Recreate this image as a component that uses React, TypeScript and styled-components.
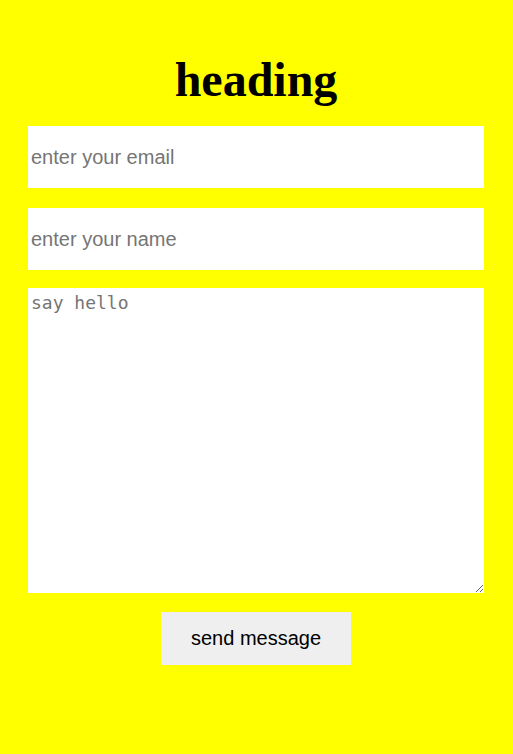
import styled, { createGlobalStyle } from "styled-components";

const GlobalStyle = createGlobalStyle`
  html, body {
    margin: 0;
    padding: 0;
    background: #ffff00;
  }
  body {
    min-height: 754px;
  }
`;

const Page = styled.main`
  display: flex;
  flex-direction: column;
  align-items: center;
  padding: 53px 29px 0 28px;
`;

const Heading = styled.h1`
  margin: 0 0 20px;
  font-family: "Liberation Serif", "Times New Roman", serif;
  font-size: 48px;
  font-weight: 700;
  color: #000;
  line-height: 53px;
`;

const Form = styled.form`
  width: 100%;
  display: flex;
  flex-direction: column;
  align-items: center;
`;

const Field = styled.input`
  box-sizing: border-box;
  width: 100%;
  height: 62px;
  margin-bottom: 20px;
  padding: 0 3px;
  border: none;
  outline: none;
  background: #fff;
  font-family: "Liberation Sans", Arial, sans-serif;
  font-size: 20px;
  color: #000;

  &::placeholder {
    color: #757575;
  }
`;

const Message = styled.textarea`
  box-sizing: border-box;
  width: 100%;
  height: 305px;
  margin: -2px 0 19px;
  padding: 4px 3px;
  border: none;
  outline: none;
  background: #fff;
  font-family: "DejaVu Sans Mono", monospace;
  font-size: 18px;
  display: block;

  &::placeholder {
    color: #757575;
  }
`;

const SendButton = styled.button`
  width: 190px;
  height: 53px;
  border: none;
  background: #efefef;
  font-family: "Liberation Sans", Arial, sans-serif;
  font-size: 20px;
  color: #000;
  cursor: pointer;
`;

export default function App() {
  return (
    <>
      <GlobalStyle />
      <Page>
        <Heading>heading</Heading>
        <Form onSubmit={(e) => e.preventDefault()}>
          <Field type="email" placeholder="enter your email" />
          <Field type="text" placeholder="enter your name" />
          <Message placeholder="say hello" />
          <SendButton type="submit">send message</SendButton>
        </Form>
      </Page>
    </>
  );
}
